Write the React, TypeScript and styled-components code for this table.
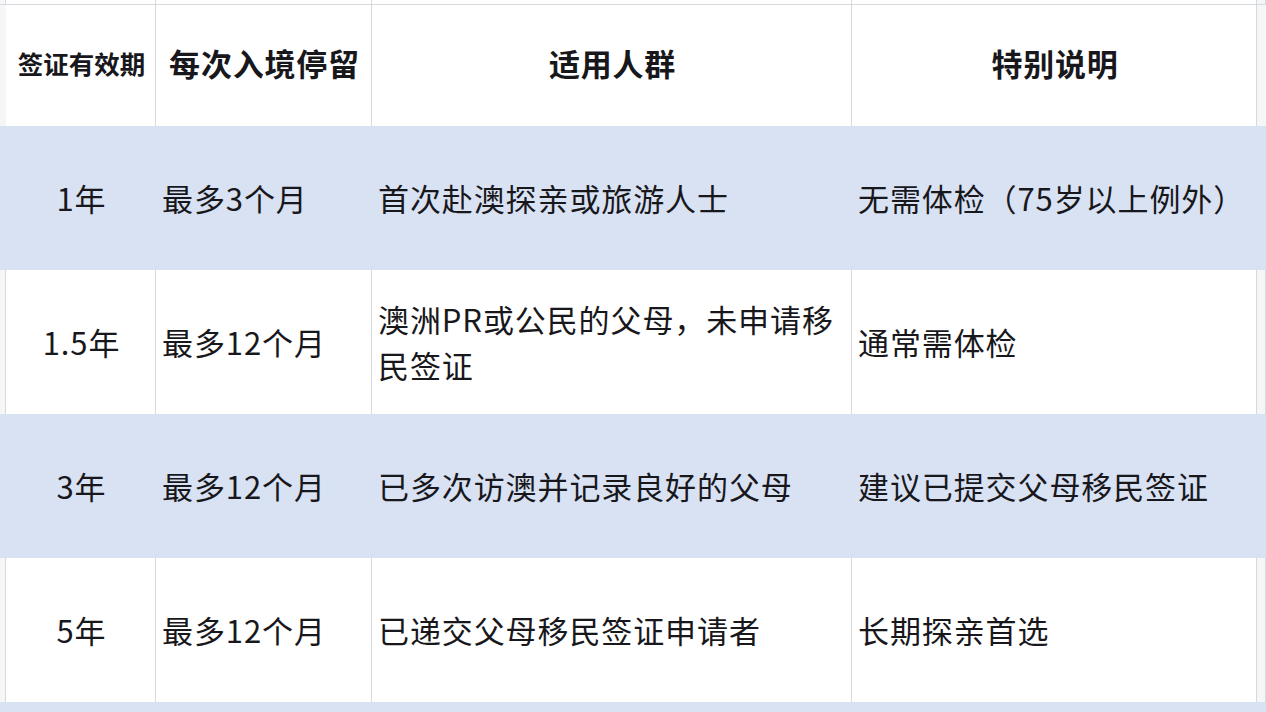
import styled, { createGlobalStyle } from "styled-components";

const GlobalStyle = createGlobalStyle`
  html, body {
    margin: 0;
    padding: 0;
    background: #ffffff;
  }
  body {
    font-family: "Noto Sans CJK SC", "Noto Sans", sans-serif;
    color: #18181c;
  }
`;

type RowProps = {
  $shaded?: boolean;
  $height: number;
};

type CellProps = {
  $align?: "left" | "center";
};

const Sheet = styled.div`
  width: 1266px;
  height: 712px;
  overflow: hidden;
  background: #ffffff;
`;

const Row = styled.div<RowProps>`
  display: grid;
  grid-template-columns: 6px 150px 216px 480px 405px 1fr;
  height: ${(p) => p.$height}px;
  background: ${(p) => (p.$shaded ? "#d9e2f3" : "#ffffff")};
`;

const Gutter = styled.div<{ $shaded?: boolean }>`
  background: ${(p) => (p.$shaded ? "#d9e2f3" : "#f5f6f8")};
  border-right: 1px solid ${(p) => (p.$shaded ? "transparent" : "#d8d9dc")};
`;

const Cell = styled.div<CellProps & { $shaded?: boolean; $topLine?: boolean }>`
  display: flex;
  align-items: center;
  justify-content: ${(p) => (p.$align === "center" ? "center" : "flex-start")};
  text-align: ${(p) => (p.$align === "center" ? "center" : "left")};
  padding: 0 4px 0 6px;
  border-right: 1px solid ${(p) => (p.$shaded ? "transparent" : "#d8d9dc")};
  border-top: ${(p) => (p.$topLine ? "1px solid #d8d9dc" : "none")};
  font-size: 31px;
  line-height: 1.5;
  letter-spacing: 0.9px;
  color: #18181c;
  overflow: hidden;
`;

const HeadCell = styled(Cell)`
  padding-bottom: 5px;
`;

const HeadText = styled.span<{ $small?: boolean }>`
  font-weight: 700;
  font-size: ${(p) => (p.$small ? "25.5px" : "31px")};
  letter-spacing: ${(p) => (p.$small ? "0" : "0.8px")};
`;

const Spacer = styled.div<{ $topLine?: boolean }>`
  border-top: ${(p) => (p.$topLine ? "1px solid #d8d9dc" : "none")};
  background: #f5f6f8;
`;

type Entry = {
  term: string;
  stay: string;
  who: string;
  note: string;
};

const rows: Entry[] = [
  { term: "1年", stay: "最多3个月", who: "首次赴澳探亲或旅游人士", note: "无需体检（75岁以上例外）" },
  { term: "1.5年", stay: "最多12个月", who: "澳洲PR或公民的父母，未申请移民签证", note: "通常需体检" },
  { term: "3年", stay: "最多12个月", who: "已多次访澳并记录良好的父母", note: "建议已提交父母移民签证" },
  { term: "5年", stay: "最多12个月", who: "已递交父母移民签证申请者", note: "长期探亲首选" },
];

const App = () => {
  return (
    <Sheet>
      <GlobalStyle />
      <Row $height={4}>
        <Gutter />
        <Cell />
        <Cell />
        <Cell />
        <Cell />
        <Gutter />
      </Row>
      <Row $height={122}>
        <Spacer $topLine />
        <HeadCell $align="center" $topLine>
          <HeadText $small>签证有效期</HeadText>
        </HeadCell>
        <HeadCell $align="center" $topLine>
          <HeadText>每次入境停留</HeadText>
        </HeadCell>
        <HeadCell $align="center" $topLine>
          <HeadText>适用人群</HeadText>
        </HeadCell>
        <HeadCell $align="center" $topLine>
          <HeadText>特别说明</HeadText>
        </HeadCell>
        <Spacer $topLine />
      </Row>
      {rows.map((r, i) => {
        const shaded = i % 2 === 0;
        return (
          <Row key={r.term} $height={144} $shaded={shaded}>
            <Gutter $shaded={shaded} />
            <Cell $align="center" $shaded={shaded}>
              {r.term}
            </Cell>
            <Cell $shaded={shaded}>{r.stay}</Cell>
            <Cell $shaded={shaded}>{r.who}</Cell>
            <Cell $shaded={shaded}>{r.note}</Cell>
            <Gutter $shaded={shaded} />
          </Row>
        );
      })}
      <Row $height={10} $shaded>
        <Gutter $shaded />
      </Row>
    </Sheet>
  );
};

export default App;
